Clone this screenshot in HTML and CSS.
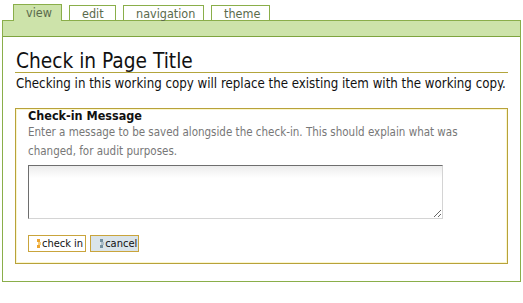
FILE: index.html
```html
<!DOCTYPE html>
<html lang="en">
<head>
  <meta charset="UTF-8">
  <title>Check in Page Title</title>
  <link rel="stylesheet" href="styles.css">
</head>
<body>

  <ul class="tabs">
    <li class="tab active">view</li>
    <li class="tab">edit</li>
    <li class="tab">navigation</li>
    <li class="tab">theme</li>
  </ul>

  <div class="box">
    <div class="bar"></div>
    <div class="content">
      <h1>Check in Page Title</h1>
      <p class="intro">Checking in this working copy will replace the existing item with the working copy.</p>

      <form class="group">
        <div class="legend">Check-in Message</div>
        <p class="help">Enter a message to be saved alongside the check-in. This should explain what was changed, for audit purposes.</p>
        <textarea class="message"></textarea>
        <div class="buttons">
          <button type="button" class="btn btn-ok">
            <svg width="4" height="9" viewBox="0 0 4 9"><rect x="0" y="0" width="3" height="3" fill="#eda52f"/><rect x="1" y="3" width="3" height="3" fill="#f5cd7a"/><rect x="0" y="6" width="3" height="3" fill="#eda52f"/></svg>check in
          </button>
          <button type="button" class="btn btn-cancel">
            <svg width="4" height="9" viewBox="0 0 4 9"><rect x="0" y="0" width="3" height="3" fill="#74909f"/><rect x="1" y="3" width="3" height="3" fill="#adbfca"/><rect x="0" y="6" width="3" height="3" fill="#74909f"/></svg>cancel
          </button>
        </div>
      </form>
    </div>
  </div>

</body>
</html>
```

FILE: styles.css
```css
body {
  margin: 0;
  padding: 4px 2px 0 2px;
  font-family: 'DejaVu Sans Condensed', 'DejaVu Sans', sans-serif;
  font-size: 13.2px;
  color: #111;
  background: #fff;
}

.tabs {
  list-style: none;
  margin: 0;
  padding: 0 0 0 11px;
  display: flex;
  gap: 7px;
  align-items: flex-end;
}

.tab {
  height: 14px;
  padding: 0 12px;
  border: 1px solid #8aae4a;
  border-bottom: none;
  background: #fff;
  color: #5b6a4c;
  font-size: 12.5px;
  line-height: 15px;
  text-align: center;
}

.tab:nth-child(1) { width: 23px; }
.tab:nth-child(2) { width: 21px; }
.tab:nth-child(3) { width: 55px; }
.tab:nth-child(4) { width: 33px; }

.tab.active {
  height: 16px;
  background: #cde3aa;
  margin-bottom: -1px;
  position: relative;
}

.box {
  border: 1px solid #8aae4a;
  width: 517px;
}

.bar {
  height: 15px;
  background: #cde3aa;
  border-bottom: 1px solid #7ea43e;
}

.content {
  padding: 13px 12px 17px 12px;
}

h1 {
  margin: 0;
  height: 22px;
  line-height: 22px;
  font-size: 20.7px;
  font-weight: normal;
  padding-left: 1px;
  border-bottom: 1px solid #b3a53c;
}

.intro {
  margin: 3px 0 0 0;
  line-height: 16px;
  padding-left: 1px;
}

.group {
  margin-top: 16px;
  border: 1px solid #b8a23a;
  box-shadow: inset 0 0 0 1px #fbf7cf;
  padding: 0 12px 11px 12px;
}

.legend {
  margin-top: -1px;
  font-weight: bold;
  font-size: 12.5px;
  line-height: 15px;
}

.help {
  margin: 0;
  color: #777;
  font-size: 11.5px;
  line-height: 19px;
  width: 450px;
}

.message {
  display: block;
  box-sizing: border-box;
  width: 415px;
  height: 54px;
  margin-top: 4px;
  border: 1px solid #d4d4d4;
  border-top-color: #6e6e6e;
  border-left-color: #6e6e6e;
  background: linear-gradient(#ececec, #fff 12px);
  resize: vertical;
}

.buttons {
  margin-top: 16px;
  display: flex;
  gap: 4px;
}

.btn {
  display: flex;
  align-items: center;
  gap: 1px;
  height: 17px;
  padding: 0 2px 0 8px;
  border: 1px solid #c9a43c;
  background: #fff;
  font-family: inherit;
  font-size: 11px;
  color: #111;
  cursor: pointer;
}

.btn-cancel {
  background: #dae4ea;
  padding: 0 1px 0 9px;
}
```
